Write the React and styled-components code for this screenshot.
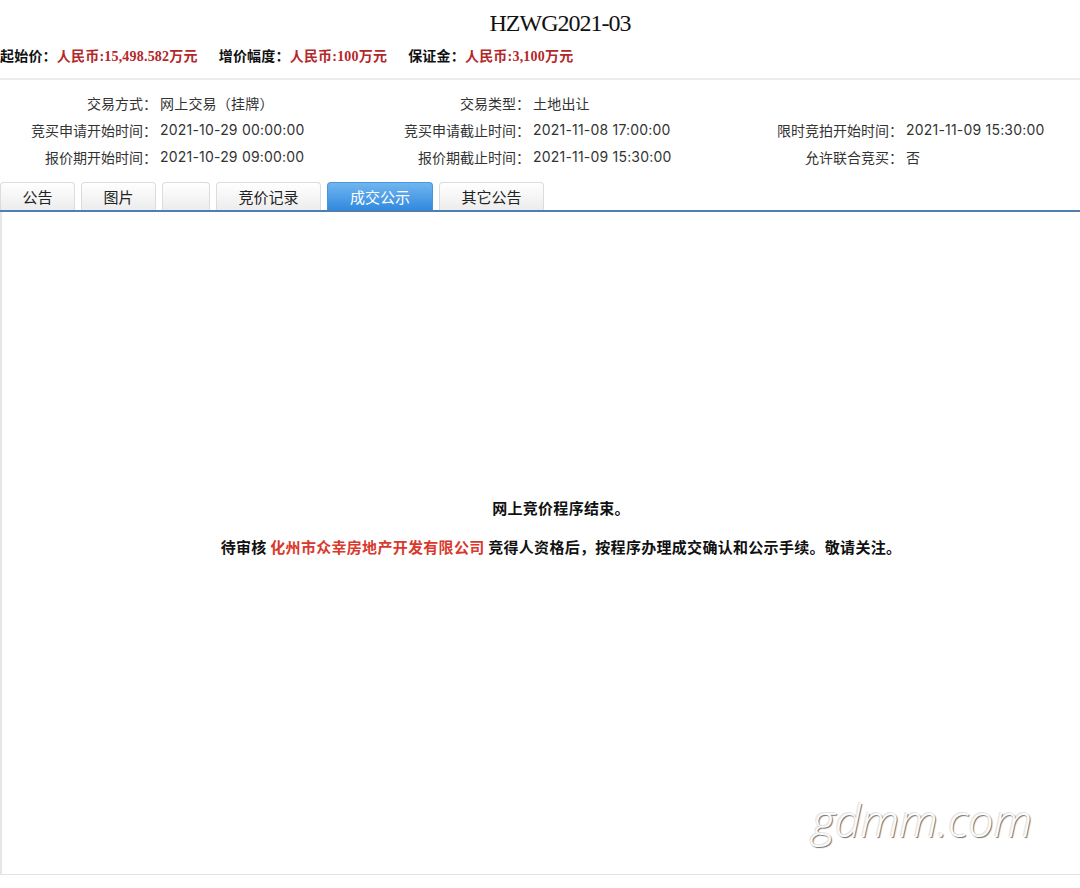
import React from "react";
import styled, { createGlobalStyle } from "styled-components";

const GlobalStyle = createGlobalStyle`
  html, body {
    margin: 0;
    padding: 0;
    background: #fff;
    overflow: hidden;
  }
  body {
    font-family: "Noto Sans", "Noto Sans CJK SC", sans-serif;
    color: #333;
  }
`;

const prices = [
  { label: "起始价：", value: "人民币:15,498.582万元" },
  { label: "增价幅度：", value: "人民币:100万元" },
  { label: "保证金：", value: "人民币:3,100万元" },
];

const info = [
  ["交易方式：", "网上交易（挂牌）"],
  ["交易类型：", "土地出让"],
  ["", ""],
  ["竞买申请开始时间：", "2021-10-29 00:00:00"],
  ["竞买申请截止时间：", "2021-11-08 17:00:00"],
  ["限时竞拍开始时间：", "2021-11-09 15:30:00"],
  ["报价期开始时间：", "2021-10-29 09:00:00"],
  ["报价期截止时间：", "2021-11-09 15:30:00"],
  ["允许联合竞买：", "否"],
];

const tabs = [
  { name: "公告", width: 75 },
  { name: "图片", width: 75 },
  { name: "", width: 48 },
  { name: "竞价记录", width: 105 },
  { name: "成交公示", width: 106, active: true },
  { name: "其它公告", width: 105 },
];

function App() {
  return (
    <Page>
      <GlobalStyle />
      <Title>HZWG2021-03</Title>
      <PriceRow>
        {prices.map((p) => (
          <PriceItem key={p.label}>
            <PriceLabel>{p.label}</PriceLabel>
            <PriceValue>{p.value}</PriceValue>
          </PriceItem>
        ))}
      </PriceRow>
      <Divider />
      <InfoGrid>
        {info.map(([label, value], i) => (
          <React.Fragment key={i}>
            <InfoLabel>{label}</InfoLabel>
            <InfoValue>{value}</InfoValue>
          </React.Fragment>
        ))}
      </InfoGrid>
      <TabBar>
        {tabs.map((t, i) => (
          <Tab key={i} $width={t.width} $active={t.active}>
            {t.name}
          </Tab>
        ))}
      </TabBar>
      <Panel>
        <Notice>网上竞价程序结束。</Notice>
        <Notice $gap>
          待审核 <Company>化州市众幸房地产开发有限公司</Company> 竞得人资格后，按程序办理成交确认和公示手续。敬请关注。
        </Notice>
        <Watermark>gdmm.com</Watermark>
      </Panel>
    </Page>
  );
}

const Page = styled.div`
  width: 1120px;
  display: flex;
  flex-direction: column;
`;

const Title = styled.h1`
  margin: 0;
  padding-top: 10px;
  font-family: "Liberation Serif", serif;
  font-weight: 400;
  font-size: 24px;
  letter-spacing: -1px;
  line-height: 26px;
  color: #111;
  text-align: center;
`;

const PriceRow = styled.div`
  display: flex;
  margin-top: 9px;
  height: 20px;
  align-items: center;
  font-family: "Liberation Serif", "Noto Sans CJK SC", serif;
  font-size: 14px;
  font-weight: 700;
`;

const PriceItem = styled.div`
  display: flex;
  margin-right: 21px;
  letter-spacing: 0.2px;
`;

const PriceLabel = styled.span`
  color: #111;
`;

const PriceValue = styled.span`
  color: #b3282b;
`;

const Divider = styled.div`
  margin-top: 13px;
  height: 2px;
  background: #ececec;
`;

const InfoGrid = styled.div`
  display: grid;
  grid-template-columns: repeat(3, 157px 216px);
  grid-auto-rows: 27px;
  margin-top: 9px;
  font-family: Inter, "Noto Sans CJK SC", sans-serif;
  font-size: 14px;
  color: #333;
`;

const InfoLabel = styled.div`
  display: flex;
  align-items: center;
  justify-content: flex-end;
`;

const InfoValue = styled.div`
  display: flex;
  align-items: center;
  padding-left: 3px;
  letter-spacing: 0.2px;
`;

const TabBar = styled.div`
  display: flex;
  gap: 6px;
  margin-top: 12px;
  height: 28px;
  border-bottom: 2px solid #4f7fb0;
`;

const Tab = styled.div`
  width: ${(p) => p.$width}px;
  box-sizing: border-box;
  display: flex;
  align-items: center;
  justify-content: center;
  border: 1px solid ${(p) => (p.$active ? "#4a94dc" : "#dcdcdc")};
  border-bottom: none;
  border-radius: 4px 4px 0 0;
  background: ${(p) =>
    p.$active
      ? "linear-gradient(#70b6f0, #3289de)"
      : "linear-gradient(#ffffff, #ececec)"};
  color: ${(p) => (p.$active ? "#fff" : "#222")};
  font-family: "Noto Sans CJK SC", sans-serif;
  font-size: 15px;
`;

const Panel = styled.div`
  position: relative;
  height: 663px;
  box-sizing: border-box;
  border-left: 2px solid #e6e6e6;
  border-bottom: 1px solid #e3e3e3;
  padding-top: 284px;
  display: flex;
  flex-direction: column;
  align-items: center;
`;

const Notice = styled.p`
  margin: ${(p) => (p.$gap ? "15px" : "0")} 0 0;
  line-height: 24px;
  font-family: "Noto Sans CJK SC", sans-serif;
  font-size: 15px;
  font-weight: 700;
  letter-spacing: 0.3px;
  color: #111;
  white-space: pre;
`;

const Company = styled.span`
  color: #d8392c;
`;

const Watermark = styled.div`
  position: absolute;
  left: 810px;
  top: 585px;
  font-family: "Open Sans", sans-serif;
  font-style: italic;
  font-weight: 300;
  font-size: 45px;
  line-height: 1;
  color: #fbfbfb;
  text-shadow: 1px 1px 1px #6f6f6f, -1px -1px 0 #e4e4e4;
`;

export default App;
